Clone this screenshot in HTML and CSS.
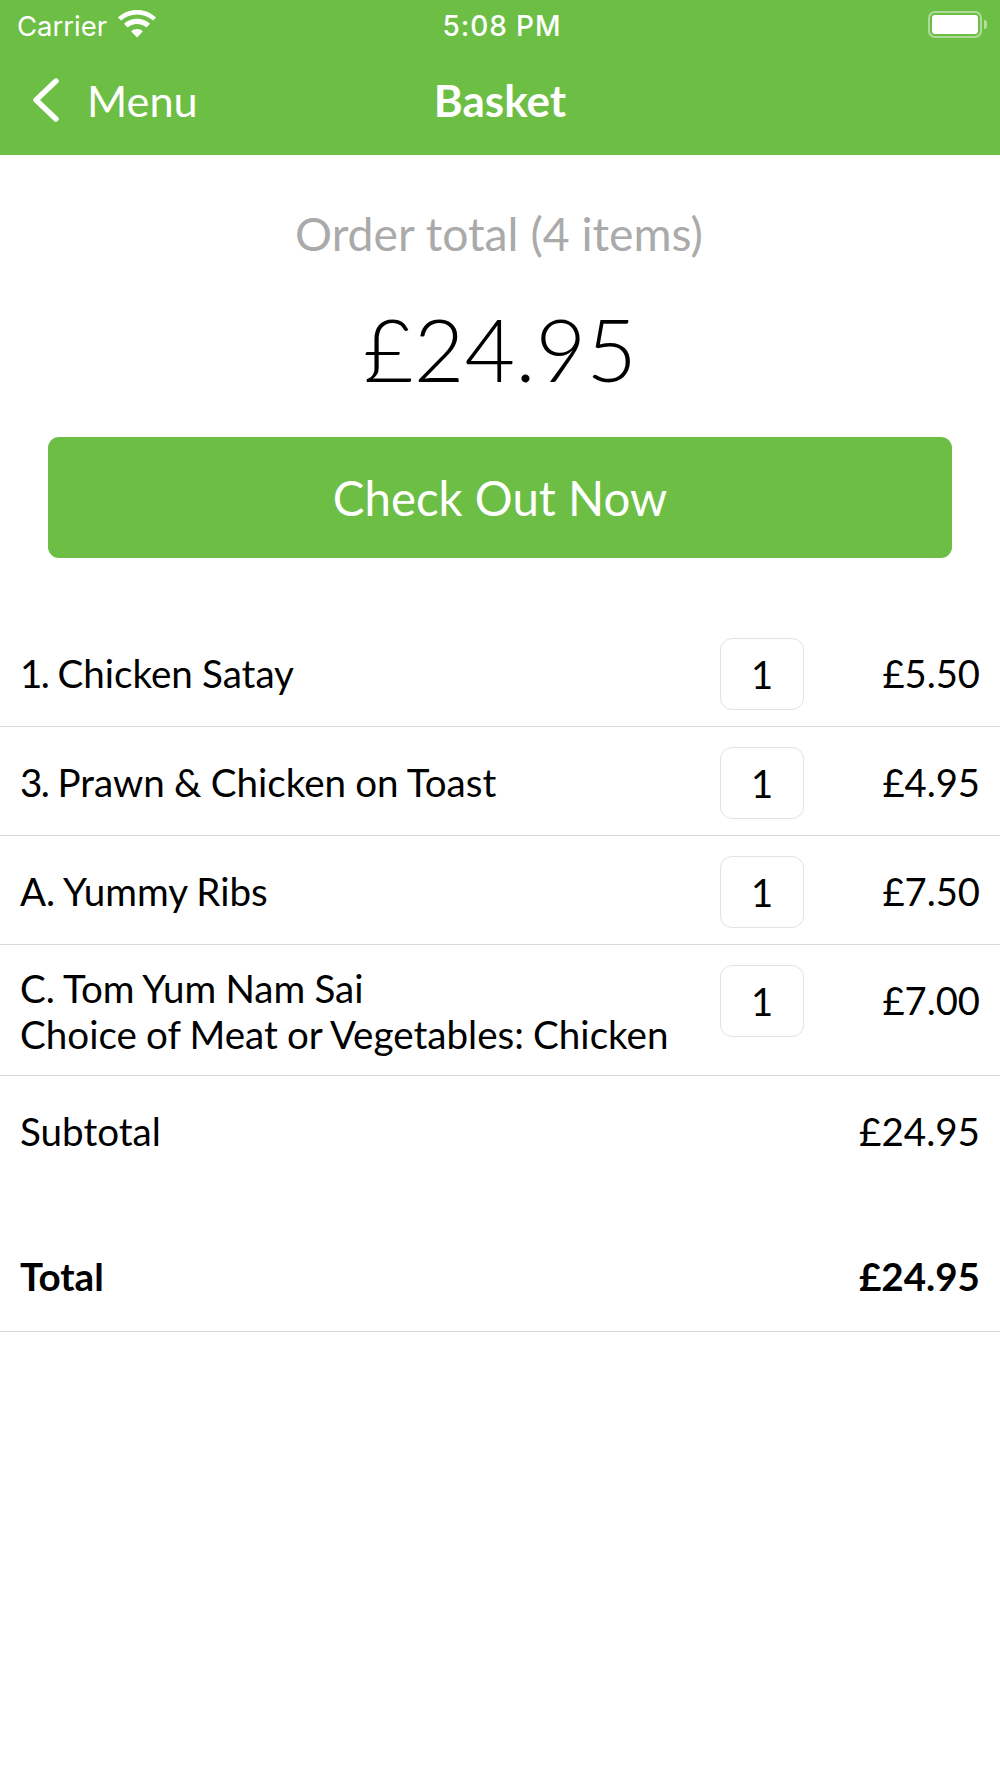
FILE: index.html
```html
<!DOCTYPE html>
<html lang="en">
<head>
<meta charset="utf-8">
<title>Basket</title>
<link rel="stylesheet" href="styles.css">
</head>
<body>
<header class="top">
  <div class="status">
    <div class="carrier">
      <span>Carrier</span>
      <svg class="wifi" viewBox="0 0 38 28" width="38" height="28"><path fill="#fff" d="M19 27.5 L13.2 21.4 C16.5 18.2 21.5 18.2 24.8 21.4 Z M9.6 17.6 L6 13.8 C13.2 7.2 24.8 7.2 32 13.8 L28.4 17.6 C23.1 12.9 14.9 12.9 9.6 17.6 Z M3 10.6 L0 7.4 C10.6 -2.4 27.4 -2.4 38 7.4 L35 10.6 C26 2.4 12 2.4 3 10.6 Z"/></svg>
    </div>
    <div class="clock">5:08 PM</div>
    <div class="battery"><span class="batt-body"><span class="batt-fill"></span></span><span class="batt-cap"></span></div>
  </div>
  <nav class="nav">
    <div class="back">
      <svg class="chev" viewBox="0 0 30 46" width="30" height="46"><path d="M26 4 L6 23 L26 42" fill="none" stroke="#fff" stroke-width="5.4" stroke-linecap="round" stroke-linejoin="round"/></svg>
      <span>Menu</span>
    </div>
    <div class="title">Basket</div>
  </nav>
</header>
<main>
  <section class="summary">
    <div class="order-label">Order total (4 items)</div>
    <div class="order-amount">£24.95</div>
    <button class="checkout">Check Out Now</button>
  </section>
  <section class="items">
    <div class="row"><div class="name"><span class="num">1.</span> Chicken Satay</div><div class="qty">1</div><div class="price">£5.50</div></div>
    <div class="row"><div class="name"><span class="num">3.</span> Prawn &amp; Chicken on Toast</div><div class="qty">1</div><div class="price">£4.95</div></div>
    <div class="row"><div class="name">A. Yummy Ribs</div><div class="qty">1</div><div class="price">£7.50</div></div>
    <div class="row row-tall"><div class="name">C. Tom Yum Nam Sai<br>Choice of Meat or Vegetables: Chicken</div><div class="qty">1</div><div class="price">£7.00</div></div>
  </section>
  <section class="totals">
    <div class="line"><span>Subtotal</span><span>£24.95</span></div>
    <div class="line line-total"><span>Total</span><span>£24.95</span></div>
  </section>
</main>
</body>
</html>
```
FILE: styles.css
```css
* { box-sizing: border-box; }
html, body { margin: 0; padding: 0; background: #fff; }
body { width: 1000px; height: 1778px; overflow: hidden; font-family: "Lato", sans-serif; color: #000; }

.top { background: #6dbe45; height: 155px; color: #fff; }
.status { height: 53px; display: grid; grid-template-columns: 1fr auto 1fr; align-items: center; padding: 0 13px 2px 17px; font-family: "Inter", sans-serif; font-size: 27.5px; }
.carrier { display: flex; align-items: center; gap: 11px; font-weight: 400; }
.wifi { margin-top: -4px; }
.clock { font-weight: 500; font-size: 28px; letter-spacing: .9px; }
.battery { justify-self: end; display: flex; align-items: center; gap: 2px; margin-top: -2px; }
.batt-body { width: 54px; height: 27px; border: 2px solid rgba(255,255,255,.45); border-radius: 7px; padding: 2px; display: block; }
.batt-fill { display: block; width: 100%; height: 100%; background: #fff; border-radius: 3px; }
.batt-cap { width: 3px; height: 9px; background: rgba(255,255,255,.5); border-radius: 0 3px 3px 0; }

.nav { height: 102px; position: relative; display: flex; align-items: center; justify-content: center; padding-bottom: 9px; }
.back { position: absolute; left: 30px; top: 20.5px; display: flex; align-items: center; gap: 27px; font-size: 43.3px; line-height: 52px; }
.title { font-size: 44px; font-weight: 700; }

.summary { display: flex; flex-direction: column; align-items: center; }
.order-label { margin-top: 50px; margin-right: 2px; font-size: 46.3px; line-height: 56px; color: #aaa; }
.order-amount { margin-top: 34px; font-size: 87.4px; line-height: 108px; font-weight: 300; }
.checkout { margin-top: 34px; width: 904px; height: 121px; border: 0; border-radius: 11px; background: #6dbe45; color: #fff; font-family: inherit; font-size: 47.4px; }

.items { margin-top: 60px; }
.row { display: flex; height: 109px; padding: 20px 20px 0; border-bottom: 1.5px solid #d9d9d9; font-size: 38.2px; line-height: 46px; }
.row-tall { height: 131px; }
.row-tall .name { padding-top: 0; }
.name { flex: 1; padding-top: 12px; font-size: 38.6px; word-spacing: -.7px; }
.num { letter-spacing: -1.6px; }
.qty { flex: none; width: 84px; height: 72px; margin-top: -.5px; border: 1.5px solid #e2e2e2; border-radius: 12px; display: flex; align-items: center; justify-content: center; }
.price { flex: none; width: 176px; text-align: right; padding-top: 12px; }

.totals { font-size: 38.6px; line-height: 46px; border-bottom: 1.5px solid #d9d9d9; padding: 32px 20px 0; height: 256px; }
.line { display: flex; justify-content: space-between; }
.line-total { margin-top: 99px; font-weight: 700; }
```
